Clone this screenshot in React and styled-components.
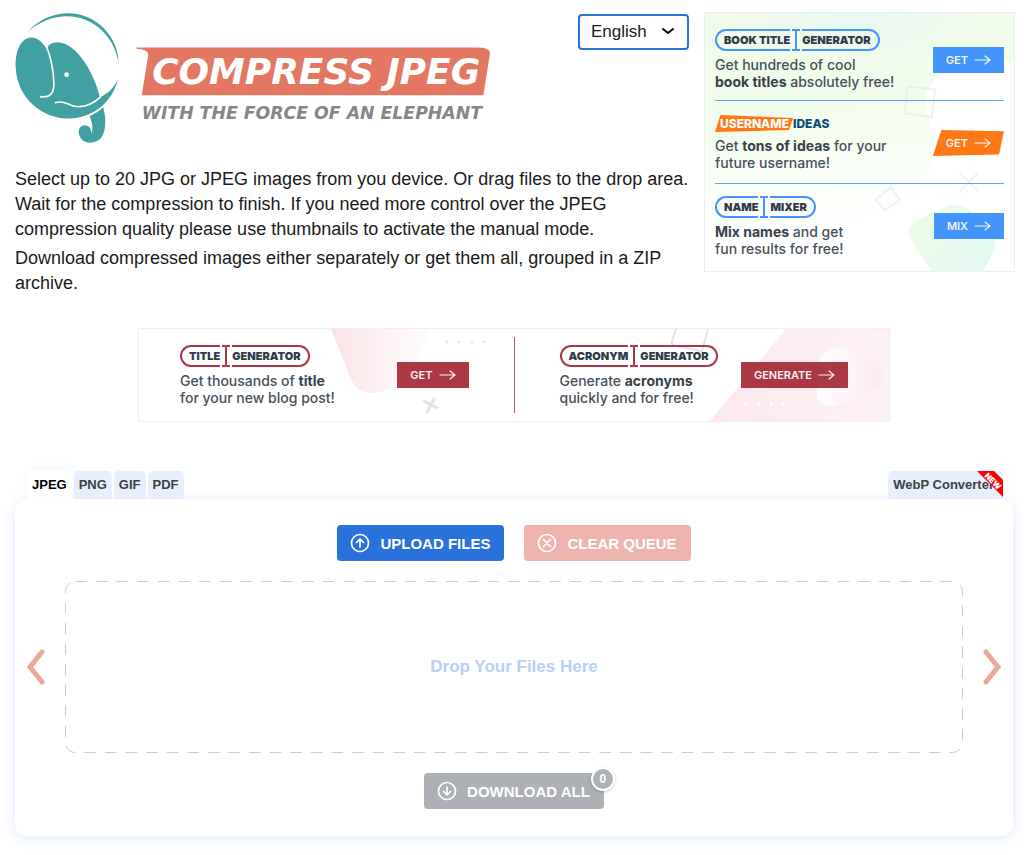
import React from 'react';
import styled, { createGlobalStyle } from 'styled-components';

export default function App() {
    return (
        <>
            <GlobalStyle />
            <Page>
                <TopRow>
                    <Intro>
                        <Header>
                            <Logo />
                            <LanguageSelect />
                        </Header>
                        <Paragraph>
                            Select up to 20 JPG or JPEG images from you device. Or drag files to the drop area.
                            Wait for the compression to finish. If you need more control over the JPEG
                            compression quality please use thumbnails to activate the manual mode.
                        </Paragraph>
                        <Paragraph>
                            Download compressed images either separately or get them all, grouped in a ZIP
                            archive.
                        </Paragraph>
                    </Intro>
                    <SideAd />
                </TopRow>
                <Main>
                    <BannerAd />
                    <Workspace />
                </Main>
            </Page>
        </>
    );
}

function Logo() {
    return (
        <LogoSvg viewBox="43 36 1427 393" role="img" aria-label="Compress JPEG">
            <g fill="#41a1a2">
                <path d="M78 98C145 23 250 21 312 87C340 118 353 150 354 188C347 150 333 120 305 92C245 33 150 33 78 98Z" />
                <path d="M92 112C55 114 44 160 45 200C48 295 125 356 205 356C275 354 335 310 352 238C341 262 325 280 298 292C285 230 230 125 168 127C145 128 137 140 142 154C133 135 115 112 92 112Z" />
                <path d="M308 322C318 360 317 396 300 416C285 432 255 432 243 418C228 400 234 376 252 376C266 376 273 388 273 402C278 385 275 367 267 348C282 343 297 332 308 322Z" />
            </g>
            <g fill="none" stroke="#fff" strokeWidth="5" strokeLinecap="round">
                <path d="M137 138C150 170 159 215 160 252C160 280 148 294 120 290" />
                <path d="M165 308C190 300 200 314 222 319C252 324 278 312 300 291" />
            </g>
            <circle cx="198" cy="224" r="7" fill="#fff" />
            <path
                fill="#e37762"
                d="M408 142H1430Q1470 142 1470 160L1450 286H424L443 166Q446 148 408 146Z"
            />
            <Wordmark x="455" y="253">COMPRESS JPEG</Wordmark>
            <Tagline x="424" y="356">WITH THE FORCE OF AN ELEPHANT</Tagline>
        </LogoSvg>
    );
}

function LanguageSelect() {
    return (
        <SelectWrap>
            <Select aria-label="Language" defaultValue="en">
                <option value="en">English</option>
                <option value="de">Deutsch</option>
                <option value="fr">Français</option>
            </Select>
            <SelectArrow viewBox="0 0 14 8">
                <path d="M2 2L7 6L12 2" fill="none" stroke="#000" strokeWidth="2" strokeLinecap="round" />
            </SelectArrow>
        </SelectWrap>
    );
}

function NamePill({ left, right, color }) {
    return (
        <Pill>
            <PillLeft $color={color}>{left}</PillLeft>
            <PillBeam viewBox="0 0 8 22">
                <path d="M0 1H8M4 1V21M0 21H8" fill="none" stroke={color} strokeWidth="2" />
            </PillBeam>
            <PillRight $color={color}>{right}</PillRight>
        </Pill>
    );
}

function ArrowRight() {
    return (
        <AdArrow viewBox="0 0 17 12">
            <path d="M1 6H16M11 2L16 6L11 10" fill="none" stroke="currentColor" strokeWidth="1.2" strokeLinecap="round" />
        </AdArrow>
    );
}

function SideAd() {
    return (
        <SideCard>
            <Backdrop viewBox="0 0 311 260" preserveAspectRatio="none">
                <defs>
                    <linearGradient id="mint" x1="0" y1="0" x2="0.15" y2="1">
                        <stop offset="0" stopColor="#f0fbe9" />
                        <stop offset="0.45" stopColor="#f2fcec" />
                        <stop offset="1" stopColor="#ffffff" />
                    </linearGradient>
                    <radialGradient id="aqua" cx="0.5" cy="0.1" r="0.4">
                        <stop offset="0" stopColor="#e9f8f3" />
                        <stop offset="1" stopColor="#e9f8f3" stopOpacity="0" />
                    </radialGradient>
                    <linearGradient id="leaf" x1="0" y1="0" x2="1" y2="1">
                        <stop offset="0" stopColor="#effce5" />
                        <stop offset="1" stopColor="#e2f8f3" />
                    </linearGradient>
                </defs>
                <path d="M0 0H311V48C255 38 208 70 225 105C238 145 225 180 190 198C130 218 60 225 0 230Z" fill="url(#mint)" />
                <path d="M0 0H311V48C255 38 208 70 225 105H0Z" fill="url(#aqua)" />
                <path d="M207 228Q201 216 214 208L240 196Q253 190 264 197L284 216Q298 232 288 245L280 260H228Z" fill="url(#leaf)" />
                <g fill="none" stroke="#dfe5ea" strokeOpacity="0.5" strokeWidth="2">
                    <path d="M204 74L232 77L228 105L201 101Z" />
                    <path d="M172 188L187 176L196 188L181 199Z" />
                    <path d="M256 161L275 180M275 161L256 180" />
                </g>
            </Backdrop>
            <SideItem>
                <AdCopy>
                    <NamePill left="BOOK TITLE" right="GENERATOR" color="#4296fb" />
                    <AdText>Get hundreds of cool<br /><b>book titles</b> absolutely free!</AdText>
                </AdCopy>
                <AdButton $bg="#4296fb">GET <ArrowRight /></AdButton>
            </SideItem>
            <SideItem>
                <AdCopy>
                    <UsernameLogo><span>USERNAME</span>IDEAS</UsernameLogo>
                    <AdText>Get <b>tons of ideas</b> for your<br />future username!</AdText>
                </AdCopy>
                <SlantedButton $bg="#ff7816">GET <ArrowRight /></SlantedButton>
            </SideItem>
            <SideItem>
                <AdCopy>
                    <NamePill left="NAME" right="MIXER" color="#4296fb" />
                    <AdText><b>Mix names</b> and get<br />fun results for free!</AdText>
                </AdCopy>
                <AdButton $bg="#4296fb">MIX <ArrowRight /></AdButton>
            </SideItem>
        </SideCard>
    );
}

function BannerAd() {
    return (
        <BannerCard>
            <Backdrop viewBox="0 0 750 92" preserveAspectRatio="none">
                <defs>
                    <linearGradient id="rose" x1="0" y1="0" x2="1" y2="0">
                        <stop offset="0" stopColor="#fbe3e7" />
                        <stop offset="0.9" stopColor="#fefafb" />
                    </linearGradient>
                    <linearGradient id="petal" x1="0" y1="0" x2="1" y2="0">
                        <stop offset="0" stopColor="#ffffff" />
                        <stop offset="0.9" stopColor="#fceaee" />
                    </linearGradient>
                    <linearGradient id="blush" x1="0" y1="0" x2="1" y2="0">
                        <stop offset="0" stopColor="#fce8ec" />
                        <stop offset="1" stopColor="#fdf1f4" />
                    </linearGradient>
                </defs>
                <path d="M192 0H291Q286 16 278 28L262 50Q250 64 234 64Q218 64 212 50Z" fill="url(#rose)" />
                <path d="M647 0H750V92H571Z" fill="url(#blush)" />
                <path d="M689 22Q703 12 716 22L742 34V58L698 76Q684 80 678 68V36Q680 28 689 22Z" fill="url(#petal)" />
                <g fill="#f8dde2">
                    <circle cx="308" cy="13" r="1.5" />
                    <circle cx="320" cy="13" r="1.5" />
                    <circle cx="333" cy="13" r="1.5" />
                    <circle cx="345" cy="13" r="1.5" />
                </g>
                <g fill="#fff">
                    <circle cx="607" cy="75" r="1.5" />
                    <circle cx="620" cy="75" r="1.5" />
                    <circle cx="632" cy="75" r="1.5" />
                    <circle cx="644" cy="75" r="1.5" />
                </g>
                <g fill="none" stroke="#e0e5ec" strokeWidth="2" strokeLinecap="round">
                    <path d="M285 72L298 79M295 70L288 83" strokeWidth="3" />
                    <path d="M537 0L533 12Q532 16 536 17L563 22L569 0" />
                </g>
            </Backdrop>
            <BannerItem>
                <AdCopy>
                    <NamePill left="TITLE" right="GENERATOR" color="#aa3845" />
                    <AdText>Get thousands of <b>title</b><br />for your new blog post!</AdText>
                </AdCopy>
                <AdButton $bg="#aa3845">GET <ArrowRight /></AdButton>
            </BannerItem>
            <BannerDivider />
            <BannerItem>
                <AdCopy>
                    <NamePill left="ACRONYM" right="GENERATOR" color="#aa3845" />
                    <AdText>Generate <b>acronyms</b><br />quickly and for free!</AdText>
                </AdCopy>
                <AdButton $bg="#aa3845">GENERATE <ArrowRight /></AdButton>
            </BannerItem>
        </BannerCard>
    );
}

function CircleIcon({ d }) {
    return (
        <ActionIcon viewBox="0 0 20 20">
            <g fill="none" stroke="currentColor" strokeWidth="1.7" strokeLinecap="round" strokeLinejoin="round">
                <circle cx="10" cy="10" r="8.5" />
                <path d={d} />
            </g>
        </ActionIcon>
    );
}

function Workspace() {
    return (
        <section>
            <Tabs>
                <Tab href="#jpeg" $active>JPEG</Tab>
                <Tab href="#png">PNG</Tab>
                <Tab href="#gif">GIF</Tab>
                <Tab href="#pdf">PDF</Tab>
                <WebpTab href="#webp">
                    WebP Converter
                    <Ribbon viewBox="0 0 26 26">
                        <path d="M0 0H17L26 9V26Z" fill="#f00" />
                        <RibbonText x="16" y="13" transform="rotate(45 16 10)">NEW</RibbonText>
                    </Ribbon>
                </WebpTab>
            </Tabs>
            <Panel>
                <Actions>
                    <ActionButton type="button" $bg="#2a72db">
                        <CircleIcon d="M10 14V6.500M6.500 9.500L10 6L13.500 9.500" />
                        UPLOAD FILES
                    </ActionButton>
                    <ActionButton type="button" $bg="#eeb5af">
                        <CircleIcon d="M6.500 6.500L13.500 13.500M13.500 6.500L6.500 13.500" />
                        CLEAR QUEUE
                    </ActionButton>
                </Actions>
                <DropRow>
                    <ScrollButton type="button" aria-label="Previous">
                        <Chevron viewBox="0 0 18 36">
                            <path d="M15 3L3 18L15 33" />
                        </Chevron>
                    </ScrollButton>
                    <DropArea>
                        <DashedFrame>
                            <DashedRect x="0.5" y="0.5" rx="10" />
                        </DashedFrame>
                        Drop Your Files Here
                    </DropArea>
                    <ScrollButton type="button" aria-label="Next">
                        <Chevron viewBox="0 0 18 36">
                            <path d="M3 3L15 18L3 33" />
                        </Chevron>
                    </ScrollButton>
                </DropRow>
                <Actions>
                    <ActionButton type="button" $bg="#adb1b6">
                        <CircleIcon d="M10 6V13.500M6.500 10.500L10 14L13.500 10.500" />
                        DOWNLOAD ALL
                        <Badge>0</Badge>
                    </ActionButton>
                </Actions>
            </Panel>
        </section>
    );
}

const GlobalStyle = createGlobalStyle`
    * {
        box-sizing: border-box;
    }

    body {
        margin: 0;
        background: #fff;
        color: #1a1a1a;
        font-family: 'Liberation Sans', Arial, sans-serif;
    }
`;

const Page = styled.div`
    padding: 12px 9px 19px 15px;
`;

const TopRow = styled.div`
    display: flex;
    align-items: flex-start;
    gap: 15px;
`;

const Intro = styled.div`
    flex: 1;
    min-width: 0;
`;

const Header = styled.header`
    display: flex;
    align-items: flex-start;
    justify-content: space-between;
    margin-bottom: 24px;
`;

const LogoSvg = styled.svg`
    flex: 0 1 475px;
    min-width: 0;
    height: 131px;
`;

const Wordmark = styled.text`
    font: italic bold 108px 'DejaVu Sans', sans-serif;
    fill: #fff;
`;

const Tagline = styled.text`
    font: italic bold 52px 'DejaVu Sans', sans-serif;
    fill: #868686;
`;

const SelectWrap = styled.div`
    position: relative;
    padding-top: 2px;
`;

const Select = styled.select`
    display: block;
    width: 111px;
    height: 36px;
    padding: 0 11px 2px;
    border: 2px solid #2a72db;
    border-radius: 4px;
    background: #fff;
    color: #1a1a1a;
    font: 17px 'Liberation Sans', Arial, sans-serif;
    appearance: none;
`;

const SelectArrow = styled.svg`
    position: absolute;
    right: 14px;
    top: 15px;
    width: 14px;
    height: 8px;
    pointer-events: none;
`;

const Paragraph = styled.p`
    margin: 0 0 4px;
    font-size: 18px;
    line-height: 25px;
`;

const Main = styled.main`
    padding-right: 2px;
`;

const Backdrop = styled.svg`
    position: absolute;
    inset: 0;
    z-index: -1;
    width: 100%;
    height: 100%;
`;

const SideCard = styled.aside`
    position: relative;
    z-index: 0;
    flex: 0 0 311px;
    padding: 4px 10px 5px;
    border: 1px solid #eceff1;
    font-family: Inter, sans-serif;
`;

const SideItem = styled.div`
    display: flex;
    align-items: center;
    justify-content: space-between;
    height: 83px;
    padding-top: 2px;

    & + & {
        border-top: 1px solid #5fa3f5;
    }
`;

const AdCopy = styled.div`
    display: flex;
    flex-direction: column;
    align-items: flex-start;
    gap: 5px;
`;

const Pill = styled.div`
    display: flex;
    height: 22px;
    gap: 2px;
    color: #2f3b45;
    font-size: 11px;
    font-weight: 900;
    line-height: 18px;
    white-space: nowrap;
`;

const PillLeft = styled.span`
    padding-left: 7px;
    border: 2px solid ${(props) => props.$color};
    border-right: 0;
    border-radius: 11px 0 0 11px;
`;

const PillRight = styled.span`
    padding-right: 7px;
    border: 2px solid ${(props) => props.$color};
    border-left: 0;
    border-radius: 0 11px 11px 0;
`;

const PillBeam = styled.svg`
    width: 8px;
    height: 22px;
`;

const AdText = styled.p`
    margin: 0;
    color: #46515b;
    font-size: 14px;
    font-weight: 500;
    line-height: 17px;
    white-space: nowrap;

    b {
        color: #36414b;
        font-weight: 700;
    }
`;

const AdButton = styled.button`
    display: flex;
    align-items: center;
    gap: 6px;
    height: 26px;
    padding: 0 13px;
    border: 0;
    background: ${(props) => props.$bg};
    color: #f6f1f2;
    font: 600 11px Inter, sans-serif;
`;

const SlantedButton = styled(AdButton)`
    clip-path: polygon(12% 0, 100% 5%, 93% 94%, 0 100%);
`;

const AdArrow = styled.svg`
    width: 17px;
    height: 12px;
`;

const UsernameLogo = styled.div`
    display: flex;
    color: #0d4a7a;
    font-size: 12px;
    font-weight: 800;
    line-height: 17px;

    span {
        padding: 0 4px 0 5px;
        background: #ff7816;
        color: #fff;
        clip-path: polygon(7% 0, 100% 18%, 95% 88%, 0 100%);
    }
`;

const BannerCard = styled.aside`
    position: relative;
    z-index: 0;
    display: flex;
    align-items: center;
    max-width: 752px;
    height: 94px;
    margin: 28px auto 49px;
    padding: 0 41px;
    border: 1px solid #efefef;
    font-family: Inter, sans-serif;
`;

const BannerItem = styled.div`
    display: flex;
    flex: 1;
    align-items: center;
    justify-content: space-between;
`;

const BannerDivider = styled.div`
    width: 1px;
    height: 76px;
    margin: 0 45px;
    background: #b5525e;
`;

const Tabs = styled.nav`
    display: flex;
    gap: 2px;
    padding: 0 10px 0 12px;
`;

const Tab = styled.a`
    position: relative;
    z-index: ${(props) => (props.$active ? 1 : 0)};
    height: 28px;
    padding: 0 5px;
    border-radius: 5px 5px 0 0;
    background: ${(props) => (props.$active ? '#fff' : '#e6effb')};
    box-shadow: ${(props) => (props.$active ? '0 -4px 8px rgba(42, 114, 219, 0.06)' : 'none')};
    color: ${(props) => (props.$active ? '#000' : '#3d4045')};
    font-size: 13px;
    font-weight: bold;
    line-height: 28px;
    text-decoration: none;
`;

const WebpTab = styled(Tab)`
    margin-left: auto;
    padding-right: 9px;
`;

const Ribbon = styled.svg`
    position: absolute;
    top: 0;
    right: 0;
    width: 26px;
    height: 26px;
`;

const RibbonText = styled.text`
    fill: #fff;
    font: 900 8px Inter, sans-serif;
    text-anchor: middle;
`;

const Panel = styled.div`
    display: flex;
    flex-direction: column;
    gap: 20px;
    padding: 26px 12px 27px;
    border-radius: 12px;
    background: #fff;
    box-shadow: 0 2px 14px rgba(42, 114, 219, 0.16);
`;

const Actions = styled.div`
    display: flex;
    justify-content: center;
    gap: 20px;
`;

const ActionButton = styled.button`
    position: relative;
    display: flex;
    align-items: center;
    gap: 10px;
    height: 36px;
    padding: 0 14px 0 13px;
    border: 0;
    border-radius: 4px;
    background: ${(props) => props.$bg};
    color: #fff;
    font: bold 15px 'Liberation Sans', Arial, sans-serif;
`;

const ActionIcon = styled.svg`
    width: 20px;
    height: 20px;
`;

const Badge = styled.span`
    position: absolute;
    top: -6px;
    right: -11px;
    width: 24px;
    height: 24px;
    border: 2px solid #fff;
    border-radius: 50%;
    background: #adb1b6;
    box-shadow: 0 1px 3px rgba(0, 0, 0, 0.2);
    font-size: 12px;
    line-height: 20px;
    text-align: center;
`;

const DropRow = styled.div`
    display: flex;
    align-items: center;
    gap: 20px;
`;

const ScrollButton = styled.button`
    padding: 0;
    border: 0;
    background: none;
`;

const Chevron = styled.svg`
    display: block;
    width: 18px;
    height: 36px;
    fill: none;
    stroke: #eda69c;
    stroke-width: 5;
    stroke-linecap: round;
`;

const DropArea = styled.div`
    position: relative;
    display: flex;
    flex: 1;
    align-items: center;
    justify-content: center;
    height: 172px;
    color: #b7d0f3;
    font-size: 17px;
    font-weight: bold;
`;

const DashedFrame = styled.svg`
    position: absolute;
    inset: 0;
    width: 100%;
    height: 100%;
`;

const DashedRect = styled.rect`
    width: calc(100% - 1px);
    height: calc(100% - 1px);
    fill: none;
    stroke: #b9cfee;
    stroke-width: 1;
    stroke-dasharray: 11.5 9.1;
`;
